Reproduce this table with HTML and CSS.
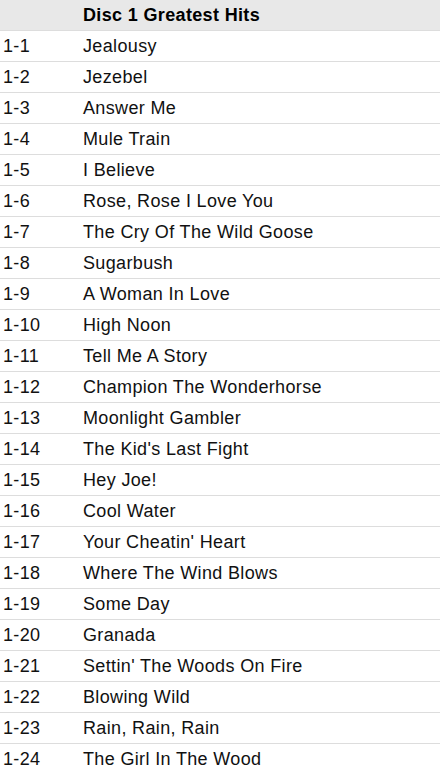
FILE: index.html
```html
<!DOCTYPE html>
<html>
<head>
<meta charset="utf-8">
<link rel="stylesheet" href="styles.css">
</head>
<body>
<table class="tracks">
<thead>
<tr class="head"><th class="num"></th><th class="title">Disc 1 Greatest Hits</th></tr>
</thead>
<tbody>
<tr><td class="num">1-1</td><td class="title">Jealousy</td></tr>
<tr><td class="num">1-2</td><td class="title">Jezebel</td></tr>
<tr><td class="num">1-3</td><td class="title">Answer Me</td></tr>
<tr><td class="num">1-4</td><td class="title">Mule Train</td></tr>
<tr><td class="num">1-5</td><td class="title">I Believe</td></tr>
<tr><td class="num">1-6</td><td class="title">Rose, Rose I Love You</td></tr>
<tr><td class="num">1-7</td><td class="title">The Cry Of The Wild Goose</td></tr>
<tr><td class="num">1-8</td><td class="title">Sugarbush</td></tr>
<tr><td class="num">1-9</td><td class="title">A Woman In Love</td></tr>
<tr><td class="num">1-10</td><td class="title">High Noon</td></tr>
<tr><td class="num">1-11</td><td class="title">Tell Me A Story</td></tr>
<tr><td class="num">1-12</td><td class="title">Champion The Wonderhorse</td></tr>
<tr><td class="num">1-13</td><td class="title">Moonlight Gambler</td></tr>
<tr><td class="num">1-14</td><td class="title">The Kid's Last Fight</td></tr>
<tr><td class="num">1-15</td><td class="title">Hey Joe!</td></tr>
<tr><td class="num">1-16</td><td class="title">Cool Water</td></tr>
<tr><td class="num">1-17</td><td class="title">Your Cheatin' Heart</td></tr>
<tr><td class="num">1-18</td><td class="title">Where The Wind Blows</td></tr>
<tr><td class="num">1-19</td><td class="title">Some Day</td></tr>
<tr><td class="num">1-20</td><td class="title">Granada</td></tr>
<tr><td class="num">1-21</td><td class="title">Settin' The Woods On Fire</td></tr>
<tr><td class="num">1-22</td><td class="title">Blowing Wild</td></tr>
<tr><td class="num">1-23</td><td class="title">Rain, Rain, Rain</td></tr>
<tr><td class="num">1-24</td><td class="title">The Girl In The Wood</td></tr>
</tbody>
</table>
</body>
</html>
```
FILE: styles.css
```css
html, body {
  margin: 0;
  padding: 0;
  background: #ffffff;
}
.tracks {
  width: 100%;
  border-collapse: collapse;
  font-family: "Liberation Sans", Arial, sans-serif;
  font-size: 18px;
  letter-spacing: 0.35px;
  color: #111111;
}
.tracks th, .tracks td {
  padding: 0 3px;
  height: 30px;
  text-align: left;
  vertical-align: middle;
}
.head {
  background: #e8e8e8;
}
.head th {
  font-weight: bold;
  color: #000;
  height: 30px;
}
.tracks tbody td {
  border-top: 1px solid #dddddd;
}
.num {
  width: 74px;
}
```
